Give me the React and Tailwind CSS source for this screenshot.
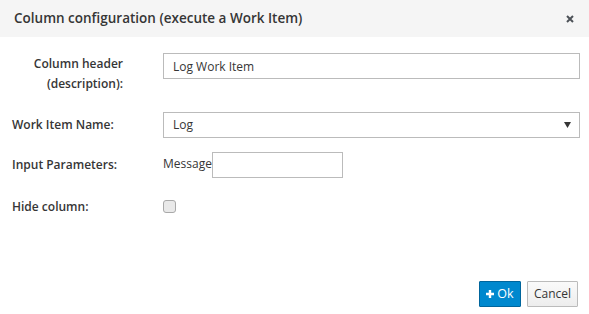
import React from "react";

function Label({ children, right }) {
  return (
    <div
      className={`w-[111px] shrink-0 text-[12px] leading-[20px] font-semibold text-[#363636] ${
        right ? "text-right" : "text-left"
      }`}
    >
      {children}
    </div>
  );
}

function App() {
  return (
    <div className="w-[589px] h-[314px] bg-white flex flex-col font-['Open_Sans',sans-serif] text-[#363636]">
      {/* Header */}
      <div className="h-[37px] bg-[#f5f5f5] flex items-center justify-between pl-[14px] pr-[15px]">
        <h4 className="text-[13.5px] font-semibold leading-none">
          Column configuration (execute a Work Item)
        </h4>
        <svg width="8" height="8" viewBox="0 0 8 8" className="text-[#4d5258]">
          <path d="M1 1 L7 7 M7 1 L1 7" stroke="currentColor" strokeWidth="2" />
        </svg>
      </div>

      {/* Body */}
      <div className="flex-1 pl-[12px] pr-[9px] pt-[16px]">
        <div className="flex gap-[40px]">
          <div className="pt-[1px]">
            <Label right>Column header (description):</Label>
          </div>
          <input
            readOnly
            value="Log Work Item"
            className="flex-1 h-[26px] border border-[#bbbbbb] px-[9px] text-[12px] text-[#363636] outline-none"
          />
        </div>

        <div className="flex items-center gap-[40px] mt-[18px]">
          <Label>Work Item Name:</Label>
          <div className="flex-1 h-[26px] border border-[#bbbbbb] pl-[9px] pr-[8px] flex items-center justify-between text-[12px]">
            <span>Log</span>
            <svg width="7" height="6" viewBox="0 0 7 6">
              <path d="M0 0 H7 L3.5 6 Z" fill="#363636" />
            </svg>
          </div>
        </div>

        <div className="flex items-center gap-[40px] mt-[14px]">
          <Label>Input Parameters:</Label>
          <div className="flex items-center">
            <span className="text-[12px] leading-[20px] -mt-[3px]">Message</span>
            <input
              readOnly
              className="w-[131px] h-[26px] border border-[#bbbbbb] px-[6px] text-[12px] outline-none"
            />
          </div>
        </div>

        <div className="flex items-center gap-[40px] mt-[16px] h-[26px]">
          <Label>Hide column:</Label>
          <div className="w-[13px] h-[13px] -mt-[1px] rounded-[3px] border border-[#a9a9a9] bg-[#e9e9e9]" />
        </div>
      </div>

      {/* Footer */}
      <div className="flex justify-end gap-[6px] pr-[11px] pb-[7px]">
        <button className="h-[26px] w-[42px] flex items-center justify-center gap-[3px] bg-[#0088ce] border border-[#00659c] rounded-[1px] text-white text-[12.5px]">
          <svg width="8" height="8" viewBox="0 0 8 8">
            <path d="M4 0 V8 M0 4 H8" stroke="white" strokeWidth="2.4" />
          </svg>
          Ok
        </button>
        <button className="h-[26px] w-[51px] flex items-center justify-center bg-gradient-to-b from-[#fafafa] to-[#ededed] border border-[#bbbbbb] rounded-[1px] text-[#363636] text-[12px]">
          Cancel
        </button>
      </div>
    </div>
  );
}

export default App;
